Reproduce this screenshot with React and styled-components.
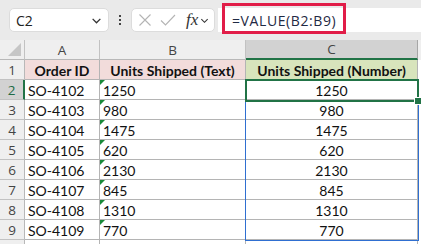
import { createGlobalStyle, styled } from "styled-components"

const GlobalStyle = createGlobalStyle`
    html, body {
        margin: 0;
        padding: 0;
        background: #ffffff;
    }
    body {
        font-family: Lato, "Liberation Sans", sans-serif;
        overflow: hidden;
    }
`

const rows = [
    { id: "SO-4102", text: "1250" },
    { id: "SO-4103", text: "980" },
    { id: "SO-4104", text: "1475" },
    { id: "SO-4105", text: "620" },
    { id: "SO-4106", text: "2130" },
    { id: "SO-4107", text: "845" },
    { id: "SO-4108", text: "1310" },
    { id: "SO-4109", text: "770" },
]

const Chevron = ({ size = 10 }) => (
    <svg width={size} height={size} viewBox="0 0 10 10">
        <path d="M1.5 3.5 L5 7 L8.5 3.5" fill="none" stroke="#333" strokeWidth="1.2" />
    </svg>
)

export default function App() {
    return (
        <>
            <GlobalStyle />
            <Window>
                <FormulaBar>
                    <NameBox>
                        <span>C2</span>
                        <Chevron size={11} />
                    </NameBox>
                    <Dots>
                        <i /><i /><i />
                    </Dots>
                    <FxBox>
                        <svg width="14" height="14" viewBox="0 0 14 14">
                            <path d="M1.5 1.5 L12.5 12.5 M12.5 1.5 L1.5 12.5" stroke="#b4b4b4" strokeWidth="1.1" />
                        </svg>
                        <svg width="16" height="14" viewBox="0 0 16 14">
                            <path d="M1 7.5 L5.5 12 L15 2" fill="none" stroke="#b4b4b4" strokeWidth="1.1" />
                        </svg>
                        <FxLabel>fx</FxLabel>
                        <Chevron size={9} />
                    </FxBox>
                    <FormulaInput>
                        <FormulaText>=VALUE(B2:B9)</FormulaText>
                        <Highlight />
                    </FormulaInput>
                </FormulaBar>

                <Sheet>
                    <Corner />
                    <ColHeader>A</ColHeader>
                    <ColHeader>B</ColHeader>
                    <ColHeader $active>C</ColHeader>
                    <Gutter $head />

                    <RowHeader>1</RowHeader>
                    <Cell $fill="#f2dcdb" $bold $center>Order ID</Cell>
                    <Cell $fill="#f2dcdb" $bold $center>Units Shipped (Text)</Cell>
                    <Cell $fill="#d8e4bc" $bold $center>Units Shipped (Number)</Cell>
                    <Gutter />

                    {rows.map((r, i) => (
                        <Row key={r.id}>
                            <RowHeader $active={i === 0}>{i + 2}</RowHeader>
                            <Cell>{r.id}</Cell>
                            <Cell $flag>{r.text}</Cell>
                            <Cell $center>{r.text}</Cell>
                            <Gutter />
                        </Row>
                    ))}

                    <RowHeader />
                    <Cell />
                    <Cell />
                    <Cell />
                    <Gutter />

                    <RangeBox />
                    <ActiveCell>
                        <FillHandle />
                    </ActiveCell>
                </Sheet>
            </Window>
        </>
    )
}

const Row = ({ children }) => <>{children}</>

const Window = styled.div`
    width: 421px;
    height: 244px;
    overflow: hidden;
    background: #ffffff;
`

const FormulaBar = styled.div`
    height: 40px;
    background: #eaeaea;
    display: flex;
    align-items: center;
    padding-left: 9px;
    box-sizing: border-box;
`

const NameBox = styled.div`
    width: 100px;
    height: 24px;
    box-sizing: border-box;
    background: #ffffff;
    border: 1px solid #dcdcdc;
    border-radius: 5px;
    display: flex;
    align-items: center;
    justify-content: space-between;
    padding: 0 6px 0 6px;
    font-family: "Open Sans", "Liberation Sans", sans-serif;
    font-size: 14px;
    color: #222;
`

const Dots = styled.div`
    width: 22px;
    display: flex;
    flex-direction: column;
    align-items: center;
    gap: 2px;

    i {
        width: 2px;
        height: 2px;
        background: #444;
    }
`

const FxBox = styled.div`
    width: 84px;
    height: 24px;
    box-sizing: border-box;
    background: #ffffff;
    border: 1px solid #dcdcdc;
    border-radius: 5px;
    display: flex;
    align-items: center;
    gap: 8px;
    padding-left: 6px;
`

const FxLabel = styled.span`
    font-family: "Liberation Serif", "DejaVu Serif", serif;
    font-style: italic;
    font-size: 17px;
    color: #333;
    margin-left: 2px;
    margin-right: -6px;
`

const FormulaInput = styled.div`
    position: relative;
    flex: 1;
    height: 24px;
    margin-left: 3px;
    background: #ffffff;
    display: flex;
    align-items: center;
    padding-left: 14px;
`

const FormulaText = styled.span`
    font-family: "Open Sans", "Liberation Sans", sans-serif;
    font-size: 14px;
    letter-spacing: 0.6px;
    color: #1f2a44;
`

const Highlight = styled.div`
    position: absolute;
    left: 4px;
    top: -5px;
    width: 124px;
    height: 31px;
    box-sizing: border-box;
    border: 3px solid #e11d48;
`

const Sheet = styled.div`
    position: relative;
    display: grid;
    grid-template-columns: 25px 75px 146px 172px 3px;
    grid-template-rows: 20px repeat(9, 20px) 20px;
    font-size: 14px;
    color: #111;
`

const Corner = styled.div`
    position: relative;
    background: #efefef;
    border-right: 1px solid #c2c2c2;
    border-bottom: 1px solid #b8b8b8;
    &::after {
        content: "";
        position: absolute;
        right: 3px;
        bottom: 3px;
        border-left: 13px solid transparent;
        border-bottom: 13px solid #c6c6c6;
    }
`

const ColHeader = styled.div`
    background: ${(p) => (p.$active ? "#d2d2d2" : "#efefef")};
    border-right: 1px solid ${(p) => (p.$active ? "#a6a6a6" : "#c2c2c2")};
    border-bottom: ${(p) => (p.$active ? "2px solid #217346" : "1px solid #b8b8b8")};
    display: flex;
    align-items: center;
    justify-content: center;
    font-family: "Open Sans", "Liberation Sans", sans-serif;
    font-size: 13.5px;
    color: #444;
    box-sizing: border-box;
`

const RowHeader = styled.div`
    background: ${(p) => (p.$active ? "#d2d2d2" : "#efefef")};
    border-right: ${(p) => (p.$active ? "2px solid #217346" : "1px solid #b8b8b8")};
    border-bottom: 1px solid #c2c2c2;
    display: flex;
    align-items: center;
    justify-content: center;
    font-family: "Open Sans", "Liberation Sans", sans-serif;
    font-size: 13.5px;
    color: ${(p) => (p.$active ? "#1e6b45" : "#444")};
    box-sizing: border-box;
`

const Gutter = styled.div`
    background: ${(p) => (p.$head ? "#efefef" : "#ffffff")};
`

const Cell = styled.div`
    position: relative;
    background: ${(p) => p.$fill || "#ffffff"};
    border-right: 1px solid #b4b4b4;
    border-bottom: 1px solid #b4b4b4;
    display: flex;
    align-items: center;
    justify-content: ${(p) => (p.$center ? "center" : "flex-start")};
    padding: 1px 3px 0;
    font-weight: ${(p) => (p.$bold ? 700 : 400)};
    white-space: nowrap;
    overflow: hidden;
    box-sizing: border-box;

    ${(p) =>
        p.$flag &&
        `&::before {
            content: "";
            position: absolute;
            left: 0;
            top: 0;
            border-top: 5px solid #1a8a3a;
            border-right: 5px solid transparent;
        }`}
`

const RangeBox = styled.div`
    position: absolute;
    left: 245px;
    top: 40px;
    width: 174px;
    height: 161px;
    box-sizing: border-box;
    border: 1px solid #2f6fd1;
    pointer-events: none;
`

const ActiveCell = styled.div`
    position: absolute;
    left: 245px;
    top: 39px;
    width: 174px;
    height: 23px;
    box-sizing: border-box;
    border: 2px solid #217346;
    pointer-events: none;
`

const FillHandle = styled.div`
    position: absolute;
    right: -5px;
    bottom: -5px;
    width: 6px;
    height: 6px;
    background: #217346;
    border: 1px solid #ffffff;
`
